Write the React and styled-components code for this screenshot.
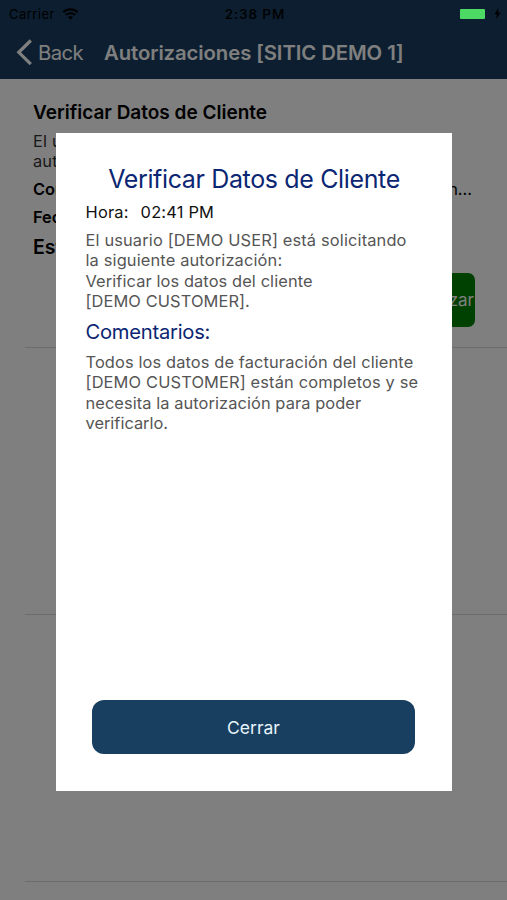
import React from "react";
import styled, { createGlobalStyle } from "styled-components";

const Global = createGlobalStyle`
  * { box-sizing: border-box; }
  body { margin: 0; background: #fff; font-family: Inter, "Liberation Sans", sans-serif; }
`;

const Screen = styled.div`
  position: relative;
  width: 507px;
  height: 900px;
  overflow: hidden;
  background: #fff;
`;

const Header = styled.header`
  height: 79px;
  background: #183d5e;
`;

const StatusBar = styled.div`
  display: grid;
  grid-template-columns: 1fr auto 1fr;
  align-items: center;
  height: 27px;
  padding: 0 6px 0 9px;
  font-size: 13px;
  color: #000;
`;

const Carrier = styled.div`
  display: flex;
  align-items: center;
  gap: 7px;
  letter-spacing: 0.45px;
`;

const Clock = styled.div`
  font-weight: 500;
  font-size: 13.5px;
  letter-spacing: 0.9px;
`;

const Power = styled.div`
  display: flex;
  justify-content: flex-end;
  align-items: center;
  gap: 9px;
`;

const Battery = styled.div`
  position: relative;
  z-index: 3;
  width: 25px;
  height: 10px;
  border-radius: 1px;
  background: #4cd964;
`;

const NavBar = styled.nav`
  display: flex;
  align-items: center;
  height: 50px;
  padding-left: 15px;
  color: #fff;
`;

const BackButton = styled.div`
  display: flex;
  align-items: center;
  gap: 5px;
  width: 89px;
  font-size: 20.3px;
  letter-spacing: -0.6px;
`;

const NavTitle = styled.div`
  font-size: 20.3px;
  font-weight: 600;
  white-space: nowrap;
  letter-spacing: ${(p) => p.$track}px;
`;

const Card = styled.section`
  display: flex;
  flex-direction: column;
  height: ${(p) => p.$height}px;
  margin-left: 25px;
  padding: 20px 32px 0 8px;
  border-bottom: 1px solid #d8d8da;
`;

const CardTitle = styled.div`
  font-size: 19px;
  line-height: 28px;
  font-weight: 600;
`;

const CardText = styled.div`
  margin: 4px 0 3px;
  font-size: 16.4px;
  line-height: 20.3px;
  color: #333;
`;

const Field = styled.div`
  display: flex;
  justify-content: space-between;
  height: 28px;
  font-size: 16.4px;
  line-height: 28px;
`;

const Label = styled.span`
  font-weight: 600;
`;

const FieldValue = styled.span`
  padding-right: 3px;
`;

const Status = styled(CardTitle)`
  margin-top: 2px;
  font-size: 19.5px;
`;

const Action = styled.div`
  display: flex;
  align-items: center;
  justify-content: flex-end;
  align-self: flex-end;
  width: 108px;
  height: 54px;
  margin-top: 12px;
  padding-right: 1px;
  border-radius: 7px;
  background: #008000;
  color: #fff;
  font-size: 17px;
`;

const Overlay = styled.div`
  position: absolute;
  inset: 0;
  z-index: 2;
  padding: 133px 55px 0 56px;
  background: rgba(0, 0, 0, 0.5);
`;

const Dialog = styled.div`
  display: flex;
  flex-direction: column;
  height: 658px;
  padding: 31px 29.5px 37px;
  background: #fff;
`;

const DialogTitle = styled.div`
  height: 33px;
  font-size: 25px;
  line-height: 31px;
  color: #0b2672;
  text-align: center;
  white-space: nowrap;
  letter-spacing: ${(p) => p.$track}px;
`;

const Time = styled.div`
  display: flex;
  gap: 12px;
  height: 30px;
  font-size: 16.4px;
  line-height: 31px;
  letter-spacing: 0.2px;
  color: #111;
`;

const Message = styled.p`
  margin: 3px 0 0;
  font-size: 16.4px;
  line-height: 20.3px;
  color: #555;
`;

const Line = styled.span`
  display: block;
  white-space: nowrap;
  letter-spacing: ${(p) => p.$track ?? 0.15}px;
`;

const Subtitle = styled.div`
  height: 38px;
  font-size: 20.2px;
  line-height: 41px;
  letter-spacing: -0.25px;
  color: #0b2672;
`;

const CloseButton = styled.button`
  height: 54px;
  margin: auto 7.5px 0 6.5px;
  border: 0;
  border-radius: 12px;
  background: #183f60;
  color: #e8f3fb;
  font: 17.5px Inter, "Liberation Sans", sans-serif;
`;

const WifiIcon = () => (
  <svg width="17" height="12" viewBox="0 0 17 12" fill="none" stroke="#000">
    <path d="M1.3 4.2C5.3.5 11.7.5 15.7 4.2" strokeWidth="2.3" />
    <path d="M3.9 7C6.5 4.7 10.5 4.7 13.1 7" strokeWidth="2.1" />
    <path d="M8.5 11.8 5.9 9.1C7.4 7.8 9.6 7.8 11.1 9.1Z" fill="#000" stroke="none" />
  </svg>
);

const BoltIcon = () => (
  <svg width="7" height="11" viewBox="0 0 7 11">
    <path d="M4.4 0 .4 6.2H3L2.3 11 6.7 4.5H3.9Z" fill="#000" />
  </svg>
);

const ChevronIcon = () => (
  <svg width="18" height="27" viewBox="0 0 18 27" fill="none" stroke="#fff" strokeWidth="3.2">
    <path d="M15.8 1.5 3.8 13.3 15.8 25.2" />
  </svg>
);

export default function App() {
  return (
    <Screen>
      <Global />
      <Header>
        <StatusBar>
          <Carrier>Carrier <WifiIcon /></Carrier>
          <Clock>2:38 PM</Clock>
          <Power><Battery /><BoltIcon /></Power>
        </StatusBar>
        <NavBar>
          <BackButton><ChevronIcon />Back</BackButton>
          <NavTitle $track={-0.07}>Autorizaciones [SITIC DEMO 1]</NavTitle>
        </NavBar>
      </Header>
      <Card $height={269}>
        <CardTitle>Verificar Datos de Cliente</CardTitle>
        <CardText>
          <Line>El usuario</Line>
          <Line>autorización:</Line>
        </CardText>
        <Field><Label>Comentarios:</Label><FieldValue>n...</FieldValue></Field>
        <Field><Label>Fecha:</Label></Field>
        <Status>Estado:</Status>
        <Action>Autorizar</Action>
      </Card>
      <Card $height={267} />
      <Card $height={267} />
      <Overlay>
        <Dialog>
          <DialogTitle $track={-0.36}>Verificar Datos de Cliente</DialogTitle>
          <Time><span>Hora:</span><span>02:41 PM</span></Time>
          <Message>
            <Line>El usuario [DEMO USER] está solicitando</Line>
            <Line>la siguiente autorización:</Line>
            <Line $track={0.1}>Verificar los datos del cliente</Line>
            <Line $track={0.1}>[DEMO CUSTOMER].</Line>
          </Message>
          <Subtitle>Comentarios:</Subtitle>
          <Message>
            <Line $track={0.12}>Todos los datos de facturación del cliente</Line>
            <Line>[DEMO CUSTOMER] están completos y se</Line>
            <Line $track={0.08}>necesita la autorización para poder</Line>
            <Line $track={0}>verificarlo.</Line>
          </Message>
          <CloseButton>Cerrar</CloseButton>
        </Dialog>
      </Overlay>
    </Screen>
  );
}
